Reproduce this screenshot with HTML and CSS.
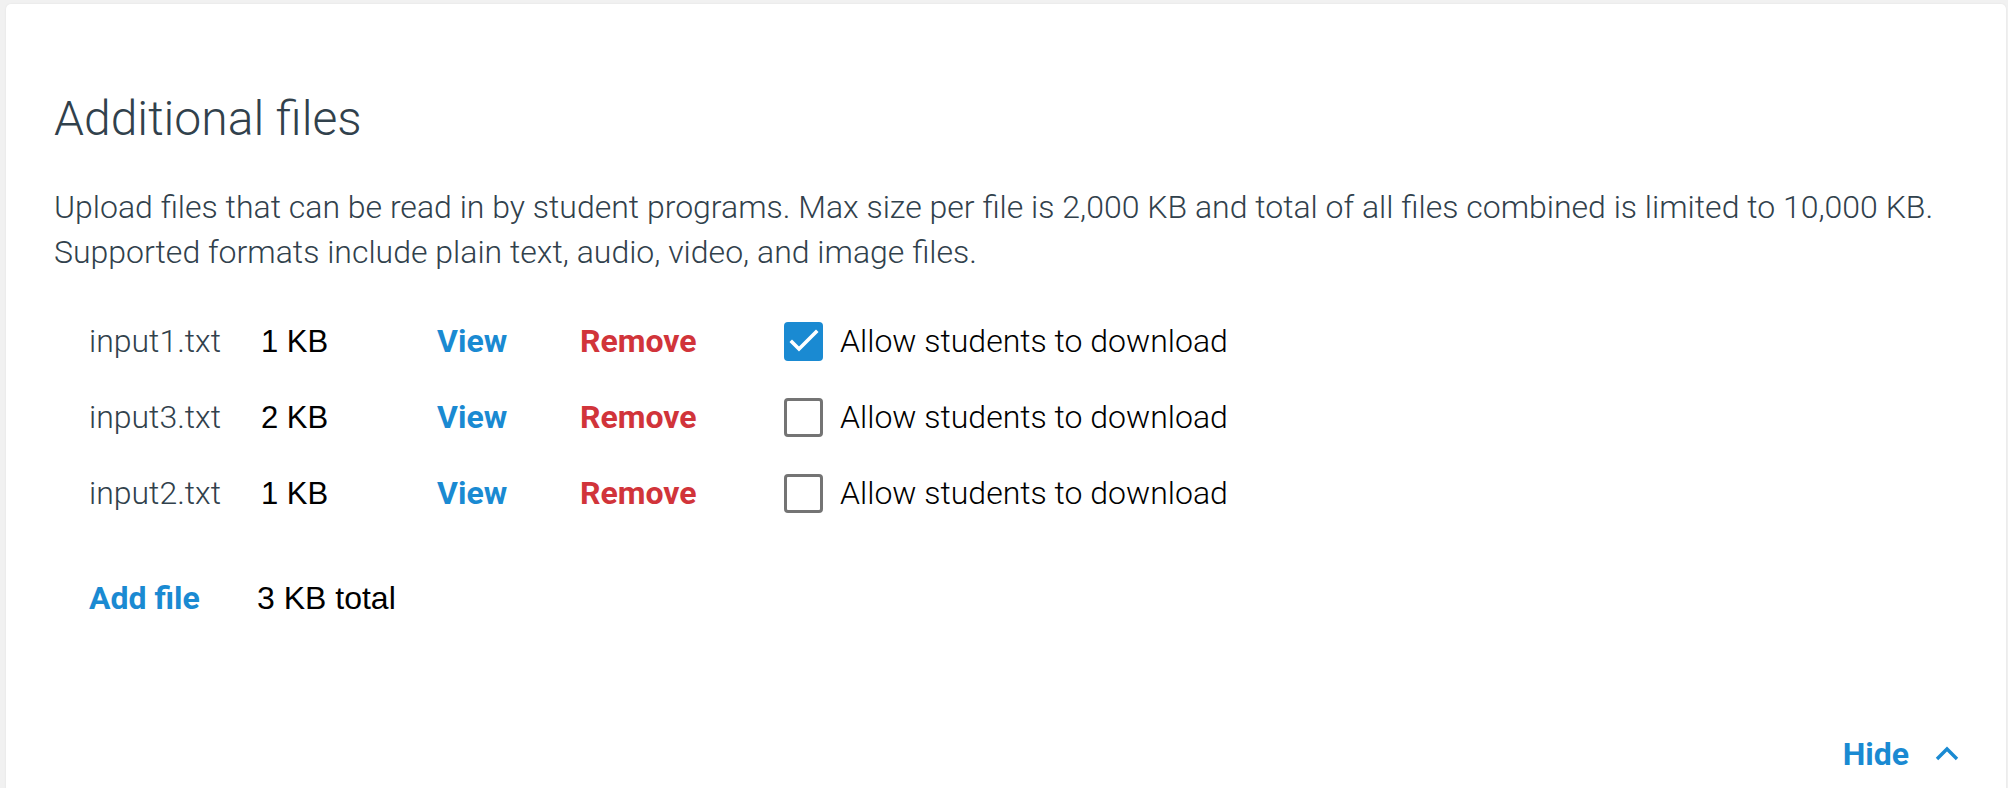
FILE: index.html
```html
<!DOCTYPE html>
<html lang="en">
<head>
<meta charset="utf-8">
<title>Additional files</title>
<link rel="stylesheet" href="styles.css">
</head>
<body>
<section class="card">
  <h2 class="title">Additional files</h2>
  <p class="desc">Upload files that can be read in by student programs. Max size per file is 2,000 KB and total of all files combined is limited to 10,000 KB.<br>Supported formats include plain text, audio, video, and image files.</p>
  <div class="files">
    <div class="row">
      <span class="name">input1.txt</span>
      <span class="size">1 KB</span>
      <a class="link view">View</a>
      <a class="link remove">Remove</a>
      <label class="check">
        <span class="box checked"><svg viewBox="0 0 39 39" width="39" height="39"><path d="M8 20 L15 27 L32 10" fill="none" stroke="#fff" stroke-width="3.6" stroke-linecap="square"/></svg></span>
        <span class="label">Allow students to download</span>
      </label>
    </div>
    <div class="row">
      <span class="name">input3.txt</span>
      <span class="size">2 KB</span>
      <a class="link view">View</a>
      <a class="link remove">Remove</a>
      <label class="check">
        <span class="box"></span>
        <span class="label">Allow students to download</span>
      </label>
    </div>
    <div class="row">
      <span class="name">input2.txt</span>
      <span class="size">1 KB</span>
      <a class="link view">View</a>
      <a class="link remove">Remove</a>
      <label class="check">
        <span class="box"></span>
        <span class="label">Allow students to download</span>
      </label>
    </div>
    <div class="row footer">
      <a class="link add">Add file</a>
      <span class="total">3 KB total</span>
    </div>
  </div>
  <div class="hide-bar">
    <a class="link hide">Hide <svg class="chev" viewBox="0 0 24 15" width="24" height="15"><path d="M2 13 L12 3 L22 13" fill="none" stroke="#1a8ad2" stroke-width="3.4"/></svg></a>
  </div>
</section>
</body>
</html>
```

FILE: styles.css
```css
html, body {
  margin: 0;
  padding: 0;
}
body {
  background: #f1f1f1;
  padding: 4px 2px 0 6px;
  font-family: Roboto, "Liberation Sans", sans-serif;
  overflow: hidden;
  height: 788px;
  box-sizing: border-box;
}
.card {
  background: #fff;
  border-radius: 5px;
  box-shadow: 0 0 2px rgba(0, 0, 0, 0.08);
  padding: 88px 47px 60px 48px;
  min-height: 900px;
  box-sizing: border-box;
}
.title {
  margin: 0;
  font-size: 48px;
  line-height: 54px;
  font-weight: 300;
  color: #31414c;
}
.desc {
  margin: 39px 0 0;
  font-size: 32px;
  line-height: 45px;
  font-weight: 300;
  color: #31414c;
}
.files {
  margin-top: 28px;
  padding-left: 35px;
}
.row {
  display: flex;
  align-items: center;
  height: 76px;
  font-size: 32px;
  line-height: 45px;
}
.name {
  width: 172px;
  font-weight: 300;
  color: #31414c;
}
.size, .total {
  width: 176px;
  font-family: "Liberation Sans", Arial, sans-serif;
  font-size: 31px;
  color: #000;
}
.link {
  font-weight: 700;
  cursor: pointer;
  color: #1a8ad2;
}
.view {
  width: 143px;
}
.remove {
  width: 204px;
  color: #d1343a;
}
.check {
  display: flex;
  align-items: center;
  gap: 17px;
}
.box {
  width: 39px;
  height: 39px;
  box-sizing: border-box;
  border: 3px solid #747474;
  border-radius: 4px;
  display: block;
}
.box.checked {
  border: none;
  background: #1a8ad2;
}
.box svg {
  display: block;
}
.label {
  font-weight: 300;
  color: #000;
}
.footer {
  margin-top: 29px;
}
.add {
  width: 168px;
}
.total {
  width: auto;
  font-size: 32px;
}
.hide-bar {
  display: flex;
  justify-content: flex-end;
  margin-top: 96px;
  font-size: 32px;
  line-height: 45px;
}
.hide {
  display: flex;
  align-items: center;
  gap: 26px;
}
.chev {
  display: block;
  margin-top: -2px;
}
```
